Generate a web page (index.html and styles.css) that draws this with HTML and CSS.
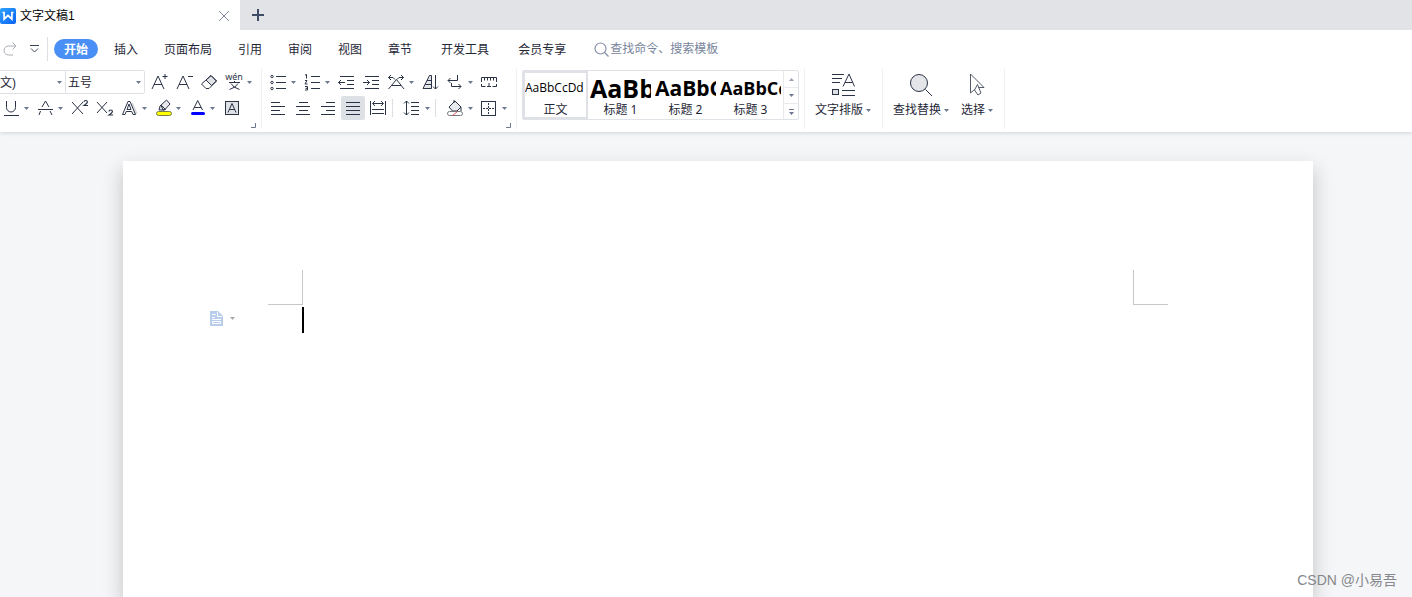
FILE: index.html
```html
<!DOCTYPE html>
<html lang="zh-CN">
<head>
<meta charset="utf-8">
<meta name="viewport" content="width=device-width, initial-scale=1">
<title>文字文稿1</title>
<link rel="stylesheet" href="styles.css">
</head>
<body>
<svg class="defs" aria-hidden="true">
  <symbol id="caret" viewBox="0 0 5 3"><path d="M0 0h5L2.500 3z" fill="currentColor"/></symbol>
</svg>

<header class="titlebar">
  <div class="doc-tab">
    <svg class="logo" viewBox="0 0 16 16" aria-hidden="true">
      <defs><linearGradient id="blue" x1="0" y1="0" x2="1" y2="1"><stop offset="0" stop-color="#30a4ff"/><stop offset="1" stop-color="#0a62f5"/></linearGradient></defs>
      <rect width="16" height="16" rx="2" fill="url(#blue)"/>
      <path d="M2.500 4.500h1.600v6.500l3.900-3.500 3.900 3.500V4.500H13.500" fill="none" stroke="#fff" stroke-width="1.700"/>
    </svg>
    <span class="doc-name">文字文稿1</span>
    <button class="plain close" aria-label="关闭"><svg width="12" height="12" viewBox="0 0 12 12"><path d="M1 1l10 10M11 1L1 11" stroke="#8490a8" fill="none"/></svg></button>
  </div>
  <button class="plain new-tab" aria-label="新建"><svg width="12" height="12" viewBox="0 0 12 12"><path d="M6 0v12M0 6h12" stroke="#3f4c68" stroke-width="2"/></svg></button>
</header>

<nav class="menu">
  <button class="plain redo" aria-label="恢复"><svg width="16" height="16" viewBox="0 0 16 16" fill="none" stroke="#a9adb5"><path d="M14 5H6.500a4.500 4.500 0 0 0 0 9H11M10.500 1.500L14 5l-3.500 3.500"/></svg></button>
  <button class="plain more" aria-label="更多"><svg width="9" height="8" viewBox="0 0 9 8" fill="none" stroke="#3c4557"><path d="M0 .5h9M1 3.500l3.500 3.500L8 3.500"/></svg></button>
  <span class="menu-rule"></span>
  <button class="menu-item active">开始</button>
  <button class="menu-item">插入</button>
  <button class="menu-item">页面布局</button>
  <button class="menu-item">引用</button>
  <button class="menu-item">审阅</button>
  <button class="menu-item">视图</button>
  <button class="menu-item">章节</button>
  <button class="menu-item spaced">开发工具</button>
  <button class="menu-item spaced">会员专享</button>
  <label class="search">
    <svg width="15" height="15" viewBox="0 0 15 15" fill="none" stroke="#8490a8" stroke-width="1.200"><circle cx="6.500" cy="6.500" r="5.500"/><path d="M10.500 10.500l4 4"/></svg>
    <input type="text" placeholder="查找命令、搜索模板" aria-label="查找命令、搜索模板">
  </label>
</nav>

<section class="ribbon">
  <div class="group font-group">
    <div class="row">
      <div class="combo combo-font"><select aria-label="字体"><option>文)</option></select><svg class="caret"><use href="#caret"/></svg></div>
      <div class="combo combo-size"><select aria-label="字号"><option>五号</option></select><svg class="caret"><use href="#caret"/></svg></div>
      <button class="tool" aria-label="增大字号"><svg class="icon" viewBox="0 0 18 18"><path d="M2 16L8 3l6 13M4 11.500h8M15 1v5M12.500 3.500h5"/></svg></button>
      <button class="tool" aria-label="减小字号"><svg class="icon" viewBox="0 0 18 18"><path d="M2 16L8 3l6 13M4 11.500h8M13 3.500h5"/></svg></button>
      <button class="tool" aria-label="清除格式"><svg class="icon" viewBox="0 0 18 18"><path d="M6 7l5.500 5.500 5-4.500L11 2.500z" fill="#dfe1e5"/><path d="M1.500 11L11 2.500 16.500 8 9 15.500H6zM6 7l5.500 5.500"/></svg></button>
      <button class="tool" aria-label="拼音指南"><svg class="icon" viewBox="0 0 18 18"><text x="9" y="7" class="pinyin">wén</text><path d="M4 9.500h11M9.500 8v1.500M6 10.500q2 4 8.500 6M13 10.500q-2 4-8.500 6"/></svg><svg class="caret"><use href="#caret"/></svg></button>
    </div>
    <div class="row row-under">
      <button class="tool" aria-label="下划线"><svg class="icon" viewBox="0 0 18 18"><path d="M4.500 2v6.500a4.500 4.500 0 0 0 9 0V2M2 16.500h15"/></svg><svg class="caret"><use href="#caret"/></svg></button>
      <button class="tool" aria-label="删除线"><svg class="icon" viewBox="0 0 18 18"><path d="M6 8l3.500-6L13 8M2 10.500h15M4.500 12L3 16M14 12l2 4"/></svg><svg class="caret"><use href="#caret"/></svg></button>
      <button class="tool" aria-label="上标"><svg class="icon" viewBox="0 0 18 18"><path d="M2 3l11 12M13 3L2 15"/><path d="M14 3q0-1.500 1.700-1.500T17.400 3Q17.400 4 14 6.500h4" stroke-width="1.200"/></svg></button>
      <button class="tool" aria-label="下标"><svg class="icon" viewBox="0 0 18 18"><path d="M2 3l10 11M12 3L2 14"/><path d="M14 12.500q0-1.500 1.700-1.500t1.700 1.500Q17.400 13.500 14 16h4" stroke-width="1.200"/></svg></button>
      <button class="tool" aria-label="文字效果"><svg class="icon" viewBox="0 0 18 18"><path d="M12 4l4.500 11" stroke="#d5d8dd" stroke-width="2"/><path d="M2.500 15.500L8 2.500h2l5.500 13H13l-1.200-3H6.200L5 15.500zM7 10.500h4L9 5z"/></svg><svg class="caret"><use href="#caret"/></svg></button>
      <button class="tool" aria-label="突出显示"><svg class="icon" viewBox="0 0 18 18"><path d="M5 11l1-4 6.500-6 3.500 4-5.500 6zM7 6l4.500 4.500L9 11z" fill="#e7e9ec"/><rect x="2.500" y="12.500" width="15" height="4" rx="2" fill="#ff0" stroke="#777c4d"/></svg><svg class="caret"><use href="#caret"/></svg></button>
      <button class="tool" aria-label="字体颜色"><svg class="icon" viewBox="0 0 18 18"><path d="M5 11l4.700-9.500L14.500 11M6.500 8.500h6.500"/><rect x="3" y="13" width="14" height="3" rx="1.500" fill="#00f" stroke="none"/></svg><svg class="caret"><use href="#caret"/></svg></button>
      <button class="tool" aria-label="字符底纹"><svg class="icon" viewBox="0 0 18 18"><rect x="3.500" y="2.500" width="13" height="13" fill="#dfe1e5"/><path d="M6 13.500L10 4.500l4 9M7.500 10.500h5"/></svg></button>
    </div>
    <button class="plain launcher" aria-label="字体设置"><svg width="5" height="5" viewBox="0 0 5 5"><path d="M4.500 0v4.500H0" fill="none" stroke="#6d788c"/></svg></button>
  </div>

  <div class="group para-group">
    <div class="row">
      <button class="tool" aria-label="项目符号"><svg class="icon" viewBox="0 0 18 18"><path d="M7 3.500h10M7 9.500h10M7 15.500h10"/><g fill="#fff"><circle cx="3" cy="3.500" r="1.200"/><circle cx="3" cy="9.500" r="1.200"/><circle cx="3" cy="15.500" r="1.200"/></g></svg><svg class="caret"><use href="#caret"/></svg></button>
      <button class="tool" aria-label="编号"><svg class="icon" viewBox="0 0 18 18"><path d="M8 3.500h9M8 9.500h9M8 15.500h9M2 2l1.500-.5V5.500M2 7.500h2L2 11h2.500M2 13.500h2.500v3.500H2M2.500 15.300h2"/></svg><svg class="caret"><use href="#caret"/></svg></button>
      <button class="tool" aria-label="减少缩进"><svg class="icon" viewBox="0 0 18 18"><path d="M3 3.500h14M10 7.500h7M10 11.500h7M3 15.500h14M1.500 9.500H8M4 7L1.500 9.500 4 12"/></svg></button>
      <button class="tool" aria-label="增加缩进"><svg class="icon" viewBox="0 0 18 18"><path d="M3 3.500h14M10 7.500h7M10 11.500h7M3 15.500h14M1 9.500h6.500M5 7l2.500 2.500L5 12"/></svg></button>
      <button class="tool" aria-label="中文版式"><svg class="icon" viewBox="0 0 18 18"><path d="M1.500 16L9.500 6.500 17 16M5 12.500h9M1.500 4.500H6l2 2M4 2L1.500 4.500 4 7M16.500 4.500H12l-2 2M14 2l2.500 2.500L14 7"/></svg><svg class="caret"><use href="#caret"/></svg></button>
      <button class="tool" aria-label="排序"><svg class="icon" viewBox="0 0 18 18"><path d="M2 15.500L8.500 2.500h2v13zM4 11.500h6.500M6 7.500h4.500" fill="#e4e6ea"/><path d="M14.500 2v14M12 13.500l2.500 2.500 2.500-2.500"/></svg></button>
      <button class="tool" aria-label="换行符"><svg class="icon" viewBox="0 0 18 18"><path d="M11.500 2v5.500H2M4.500 5L2 7.500 4.500 10M5.500 10v3.500h9.500M12.500 11l2.500 2.500-2.500 2.500"/></svg><svg class="caret"><use href="#caret"/></svg></button>
      <button class="tool" aria-label="制表位"><svg class="icon" viewBox="0 0 18 18"><path d="M1.500 9V4.500h15V9M4.500 5v2.500M7.500 5v2.500M10.500 5v2.500M13.500 5v2.500M1.500 11v2.500h4M16.500 11v2.500h-4M7 13.500h4M9 10v3.500"/></svg></button>
    </div>
    <div class="row">
      <button class="tool" aria-label="左对齐"><svg class="icon" viewBox="0 0 18 18"><path d="M2 3.500h9M2 7.500h14M2 11.500h9M2 15.500h14"/></svg></button>
      <button class="tool" aria-label="居中"><svg class="icon" viewBox="0 0 18 18"><path d="M5 3.500h9M2 7.500h14M5 11.500h9M2 15.500h14"/></svg></button>
      <button class="tool" aria-label="右对齐"><svg class="icon" viewBox="0 0 18 18"><path d="M7 3.500h9M2 7.500h14M7 11.500h9M2 15.500h14"/></svg></button>
      <button class="tool selected" aria-label="两端对齐"><svg class="icon" viewBox="0 0 18 18"><path d="M2 3.500h14M2 7.500h14M2 11.500h14M2 15.500h14"/></svg></button>
      <button class="tool" aria-label="分散对齐"><svg class="icon" viewBox="0 0 18 18"><path d="M1.500 2v14M16.500 2v14M4 4.500h10M6 2L3.500 4.500 6 7M12 2l2.500 2.500L12 7M3 10.500h12M3 14.500h12"/></svg></button>
      <span class="tool-rule"></span>
      <button class="tool" aria-label="行距"><svg class="icon" viewBox="0 0 18 18"><path d="M3.500 2v14M1 4.500L3.500 2 6 4.500M1 13.500L3.500 16 6 13.500M8 3.500h8M8 7.500h8M8 11.500h8M8 15.500h8"/></svg><svg class="caret"><use href="#caret"/></svg></button>
      <span class="tool-rule"></span>
      <button class="tool" aria-label="底纹"><svg class="icon" viewBox="0 0 18 18"><path d="M3 8l6-6 6 6-4 4H6.500z" fill="#e9ebee"/><path d="M8 1v3M15 8v4"/><rect x="1.500" y="12.500" width="15" height="4" rx="2" fill="#fff" stroke="#74777e"/><path d="M6.500 16.500l5-4" stroke="#f0545b"/></svg><svg class="caret"><use href="#caret"/></svg></button>
      <button class="tool" aria-label="边框"><svg class="icon" viewBox="0 0 18 18"><rect x="1.500" y="2.500" width="14" height="14"/><path d="M8.500 4v11M3 9.500h11" stroke-dasharray="2 1"/></svg><svg class="caret"><use href="#caret"/></svg></button>
    </div>
    <button class="plain launcher" aria-label="段落设置"><svg width="5" height="5" viewBox="0 0 5 5"><path d="M4.500 0v4.500H0" fill="none" stroke="#6d788c"/></svg></button>
  </div>

  <div class="group style-group">
    <div class="gallery">
      <button class="style current"><span class="sample body">AaBbCcDd</span><span class="style-name">正文</span></button>
      <button class="style"><span class="sample h1">AaBb</span><span class="style-name">标题 1</span></button>
      <button class="style"><span class="sample h2">AaBbC</span><span class="style-name">标题 2</span></button>
      <button class="style"><span class="sample h3">AaBbCc</span><span class="style-name">标题 3</span></button>
      <div class="scroller">
        <button class="plain" aria-label="上一行"><svg class="caret up"><use href="#caret"/></svg></button>
        <button class="plain" aria-label="下一行"><svg class="caret"><use href="#caret"/></svg></button>
        <button class="plain" aria-label="展开"><svg width="5" height="6" viewBox="0 0 5 6" fill="#6b7890"><path d="M0 0h5v1H0zM0 3h5L2.500 6z"/></svg></button>
      </div>
    </div>
  </div>

  <div class="group big-group">
    <button class="big">
      <svg class="big-icon" viewBox="0 0 24 24"><path d="M1 1.500h12M1 5.500h10M1 9.500h8M12 13.500L18 1l5.500 12.500M14 9.500h7.500M11 17.500h13M11 22.500h13"/><rect x="1.500" y="16.500" width="6" height="5" fill="#dfe1e5"/></svg>
      <span class="big-label">文字排版<svg class="caret"><use href="#caret"/></svg></span>
    </button>
  </div>

  <div class="group big-group">
    <button class="big">
      <svg class="big-icon" viewBox="0 0 24 24"><circle cx="10" cy="10" r="8.500" fill="#e3e5e8"/><path d="M16.500 16.500l6.500 6.500"/></svg>
      <span class="big-label">查找替换<svg class="caret"><use href="#caret"/></svg></span>
    </button>
    <button class="big">
      <svg class="big-icon" viewBox="0 0 24 24"><path d="M5.500 1v19l4-3.500M5.500 1L19 14.500h-5.500M9.500 17l3-5.500 3.500 8.500-3 2z" fill="#fff" stroke="#525967"/></svg>
      <span class="big-label">选择<svg class="caret"><use href="#caret"/></svg></span>
    </button>
  </div>
</section>

<main class="workspace">
  <article class="page">
    <div class="margin-marks"><span class="mark mark-left"></span><span class="mark mark-right"></span></div>
    <div class="line">
      <button class="plain doc-tool" aria-label="段落布局">
        <svg width="13" height="15" viewBox="0 0 13 15"><path d="M0 0h8l5 5v10H0z" fill="#b8cdec"/><path d="M7.500 1v4.500H12M2 3.500h4M2 6.500h3M2 8.500h9M2.500 10.500h8v2h-8z" stroke="#fff" fill="none"/></svg>
        <svg class="caret"><use href="#caret"/></svg>
      </button>
      <span class="cursor"></span>
    </div>
  </article>
  <span class="watermark">CSDN @小易吾</span>
</main>
</body>
</html>
```

FILE: styles.css
```css
* { box-sizing: border-box; }

body {
  margin: 0;
  min-height: 100vh;
  display: flex;
  flex-direction: column;
  background: #f5f6f8;
  color: #1f2737;
  font: 12px/16px "Liberation Sans", "Noto Sans CJK SC", sans-serif;
}

button, input, select { font: inherit; color: inherit; }
button { border: 0; background: none; padding: 0; }
svg { display: block; flex: none; }
.defs { position: absolute; width: 0; height: 0; }
.plain { display: grid; place-items: center; }

.caret { width: 5px; height: 3px; color: #6b7890; }
.caret.up { rotate: 180deg; color: #9aa3b3; }

/* Title bar */
.titlebar { display: flex; height: 30px; background: #e1e3e7; }
.doc-tab {
  display: flex;
  align-items: center;
  width: 240px;
  padding: 2px 10px 0 0;
  background: #fff;
  color: #000;
}
.logo { width: 16px; height: 16px; margin-right: 4px; }
.close { margin-left: auto; }
.new-tab { width: 36px; }

/* Menu */
.menu {
  position: relative;
  z-index: 1;
  display: flex;
  align-items: center;
  height: 38px;
  background: #fff;
  white-space: nowrap;
}
.redo { margin-left: 2px; }
.more { margin-left: 12px; }
.menu-rule { width: 1px; height: 24px; margin: 0 6px 0 8px; background: #dcdfe4; }
.menu-item { height: 20px; padding: 1px 13px 0; line-height: 20px; }
.menu-item.active {
  padding: 1px 10px 0;
  margin-right: 3px;
  border-radius: 10px;
  background: #4a8ff5;
  color: #fff;
  font-weight: bold;
}
.menu-item.spaced { margin-left: 3px; }
.search { display: flex; align-items: center; gap: 1px; margin-left: 15px; }
.search input { width: 160px; height: 20px; padding: 0; border: 0; background: none; outline: 0; }
.search input::placeholder { color: #78849b; opacity: 1; }

/* Ribbon */
.ribbon {
  position: relative;
  display: flex;
  height: 64px;
  padding-bottom: 3px;
  background: #fff;
  box-shadow: 0 1px 4px #cfd2d7;
}
.group {
  display: flex;
  flex-direction: column;
  gap: 2px;
  padding: 2px 5px;
  border-right: 1px solid #eef0f2;
}
.row { display: flex; gap: 1px; }
.tool {
  display: flex;
  align-items: center;
  gap: 4px;
  height: 24px;
  padding: 0 3px;
  border-radius: 2px;
}
.tool.selected { background: #dde1e6; }
.icon { width: 18px; height: 18px; overflow: visible; fill: none; stroke: #2b3346; }
.icon text { fill: #2b3346; stroke: none; text-anchor: middle; font-family: "Noto Sans", sans-serif; }
.pinyin { font-size: 9px; }
.tool-rule { width: 1px; height: 18px; margin: 3px 6px 0 1px; background: #dcdfe4; }
.launcher { align-self: flex-end; margin-top: 1px; }

.font-group { padding-left: 0; width: 262px; }
.row-under { margin-left: -1px; }
.combo {
  display: grid;
  align-items: center;
  height: 24px;
  border: 1px solid #dfe2e7;
}
.combo select {
  grid-area: 1 / 1;
  width: 100%;
  height: 22px;
  padding: 2px 0 0;
  border: 0;
  background: none;
  appearance: none;
}
.combo .caret { grid-area: 1 / 1; justify-self: end; margin-right: 3px; pointer-events: none; }
.combo-font { width: 66px; border-left: 0; }
.combo-size { width: 80px; margin: 0 1px 0 -2px; padding-left: 2px; border-radius: 0 2px 2px 0; }

.para-group { width: 255px; padding-left: 4px; }

/* Style gallery */
.style-group { width: 288px; }
.gallery { display: flex; height: 50px; border: 1px solid #dfe2e7; border-radius: 2px; }
.style {
  display: flex;
  flex-direction: column;
  width: 65px;
  height: 48px;
  padding: 3px 2px 0;
  text-align: center;
}
.style.current { box-shadow: inset 0 0 0 2px #dfe1e6; }
.sample {
  display: block;
  height: 28px;
  overflow: hidden;
  color: #000;
  font-family: "Open Sans", "Noto Sans", sans-serif;
  line-height: 28px;
  text-align: left;
  white-space: nowrap;
}
.sample.body { font-size: 12px; }
.sample.h1 { font-size: 25px; font-weight: bold; }
.sample.h2 { font-size: 21px; font-weight: bold; }
.sample.h3 { font-size: 18px; font-weight: bold; }
.style-name { font-family: "Noto Sans", "Noto Sans CJK SC", sans-serif; }
.scroller { display: grid; flex: 1; grid-template-rows: repeat(3, 1fr); border-left: 1px solid #e8eaed; }
.scroller button + button { border-top: 1px solid #e8eaed; }

/* Large buttons */
.big-group { flex-direction: row; gap: 12px; padding: 2px 11px 2px 10px; }
.big { display: flex; flex-direction: column; align-items: center; gap: 5px; padding-top: 3px; }
.big-icon { width: 24px; height: 24px; fill: none; stroke: #2b3346; }
.big-label { display: flex; align-items: center; gap: 3px; white-space: nowrap; }

/* Document */
.workspace {
  position: relative;
  flex: 1;
  display: flex;
  padding: 29px 99px 0 123px;
  overflow: hidden;
}
.page {
  flex: 1;
  padding-top: 109px;
  background: #fff;
  box-shadow: 0 9px 18px 1px #c5c6c8;
}
.margin-marks { display: flex; justify-content: space-between; padding: 0 145px; }
.mark { width: 35px; height: 35px; border-bottom: 1px solid #c8c8c8; }
.mark-left { border-right: 1px solid #c8c8c8; }
.mark-right { border-left: 1px solid #c8c8c8; }
.line { display: flex; padding: 2px 0 0 87px; }
.doc-tool { display: flex; align-items: center; gap: 7px; width: 92px; height: 23px; }
.doc-tool .caret { color: #aaa; }
.cursor { width: 2px; height: 26px; background: #000; }
.watermark {
  position: absolute;
  right: 15px;
  bottom: 7px;
  color: #86888c;
  font: 14px/20px "Liberation Sans", "Noto Sans CJK SC", sans-serif;
}
```
